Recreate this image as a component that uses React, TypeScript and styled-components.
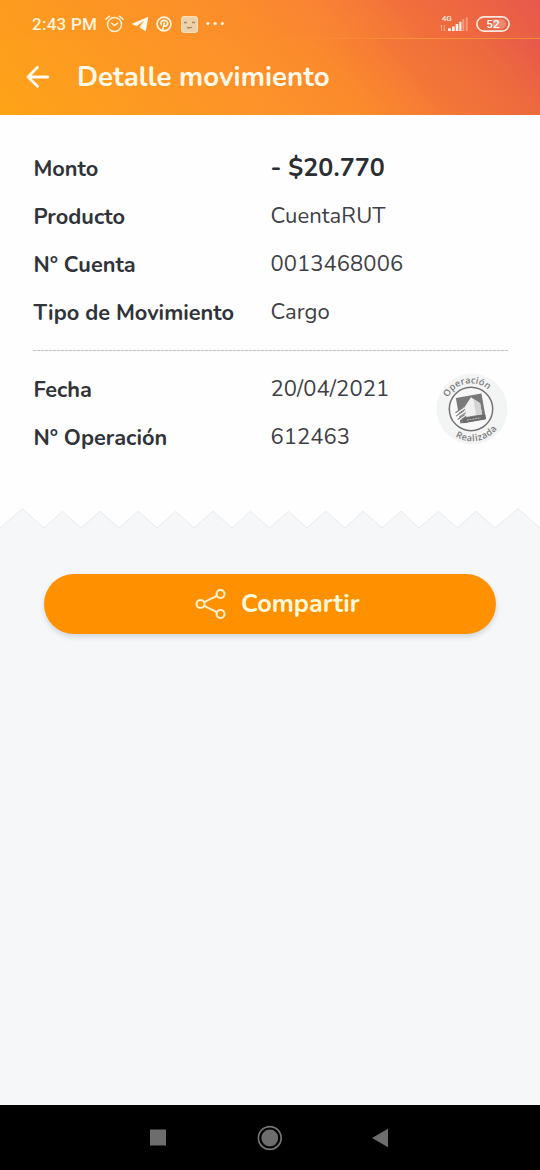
import React from "react";
import styled, { createGlobalStyle } from "styled-components";

const GlobalStyle = createGlobalStyle`
  * { box-sizing: border-box; }
  body { margin: 0; background: #f5f7f9; font-family: "Nunito", "Open Sans", "Noto Sans", sans-serif; }
`;

const Screen = styled.div`
  display: flex;
  flex-direction: column;
  width: 540px;
  height: 1170px;
  background: #f5f7f9;
`;

const StatusBar = styled.div`
  display: flex;
  align-items: center;
  justify-content: space-between;
  height: 39px;
  padding: 9px 30px 0 32px;
  color: #fff3dc;
  background: linear-gradient(90deg, transparent 50%, #fb8f3a 75%) 0 100% / 100% 1px no-repeat,
    linear-gradient(51deg, transparent 72.5%, rgba(228, 75, 80, 0.05) 73%),
    linear-gradient(52deg, #fd9d1d 0%, #fc8d2b 45%, #f98333 60%, #f2703b 76%, #eb6244 92%, #e7584d 100%);
  font-family: Roboto, sans-serif;
`;

const StatusGroup = styled.div<{ $gap: number }>`
  display: flex;
  align-items: center;
  gap: ${(p) => p.$gap}px;
`;

const Clock = styled.span`
  font-size: 17px;
  line-height: 20px;
  font-weight: 500;
  letter-spacing: 0.25px;
  white-space: nowrap;
  width: 66px;
`;

const Header = styled.header`
  display: flex;
  align-items: center;
  height: 76px;
  padding: 0 26px;
  gap: 27px;
  background: linear-gradient(51deg, transparent 73%, rgba(228, 75, 80, 0.05) 73.4%),
    linear-gradient(48deg, #fea317 0%, #fd922a 45%, #fb8a2c 61%, #f67b35 72%, #ed6b3d 89%, #e7584b 100%);
`;

const Fitted = styled.span<{ $size: number; $weight?: number; $spacing?: number; $color?: string }>`
  font-size: ${(p) => p.$size}px;
  font-weight: ${(p) => p.$weight ?? 400};
  letter-spacing: ${(p) => p.$spacing ?? 0}px;
  color: ${(p) => p.$color ?? "#303338"};
  line-height: 30px;
  white-space: nowrap;
`;

const Label = styled(Fitted)`
  padding-top: 1px;
`;

const Receipt = styled.main`
  background: #fefefe;
  padding: 38px 32px 0 33px;
  height: 393px;
`;

const Row = styled.div`
  display: grid;
  grid-template-columns: 237px 1fr;
  height: 48px;
  padding-left: 0.4px;
  align-items: start;
`;

const Divider = styled.div`
  height: 1px;
  margin: 5px 0 23px;
  background: repeating-linear-gradient(90deg, #c3c5c8 0 3px, #ededee 3px 4px);
`;

const Operation = styled.section`
  display: flex;
  justify-content: space-between;
`;

const OperationRows = styled.div`
  flex: 1;
`;

const Stamp = styled.svg`
  flex: none;
  width: 72px;
  height: 72px;
  margin-top: -1px;
`;

const TornEdge = styled.svg`
  display: block;
  flex: none;
`;

const Actions = styled.div`
  flex: 1;
  padding: 44px 44px 0;
`;

const ShareButton = styled.button`
  display: flex;
  align-items: center;
  width: 452px;
  height: 60px;
  padding: 0 0 0 151px;
  gap: 14px;
  border: 0;
  border-radius: 30px;
  background: #ff9100;
  box-shadow: 0 3px 5px rgba(60, 70, 90, 0.18);
  font-family: inherit;
`;

const NavBar = styled.nav`
  display: flex;
  align-items: center;
  justify-content: space-between;
  height: 65px;
  padding: 0 152px 0 149px;
  background: #000;
`;

type Detail = { label: string; value: string; strong?: boolean };

const details: Detail[] = [
  { label: "Monto", value: "- $20.770", strong: true },
  { label: "Producto", value: "CuentaRUT" },
  { label: "N° Cuenta", value: "0013468006" },
  { label: "Tipo de Movimiento", value: "Cargo" },
];

const operation: Detail[] = [
  { label: "Fecha", value: "20/04/2021" },
  { label: "N° Operación", value: "612463" },
];

const DetailRow = ({ label, value, strong }: Detail) => (
  <Row>
    <Label $size={21.75} $weight={670} $spacing={0.01}>{label}</Label>
    <Fitted $size={strong ? 25 : 22} $weight={strong ? 700 : 400} $spacing={0.08} $color={strong ? "#2b2e33" : "#3d4045"}>
      {value}
    </Fitted>
  </Row>
);

const peaks = [22.5, 62.5, 100, 138, 175.5, 213, 250.5, 288.5, 326, 363, 401, 438.5, 476, 518];
const valleys = [44, 81, 119, 157, 194, 232, 269.5, 307, 345, 382, 419, 457.5, 495, 540];
const tear = peaks
  .map((x, i) => `L${x} ${i === 0 || i === peaks.length - 1 ? 0.6 : 3.2}L${valleys[i]} 20`)
  .join("");

export default function App() {
  return (
    <Screen>
      <GlobalStyle />
      <StatusBar>
        <StatusGroup $gap={7}>
          <Clock>2:43 PM</Clock>
          <svg width="19" height="18" viewBox="0 0 19 18" fill="none" stroke="#fff0d2" strokeWidth="1.5" strokeLinecap="round">
            <circle cx="9.5" cy="9.5" r="7" />
            <path d="M1 4.2 4.6 1.2M18 4.2 14.4 1.2M6.7 8.3 9.3 10.5 12.6 8.2" />
          </svg>
          <svg width="18" height="16" viewBox="0 0 18 16" fill="#fffaf0">
            <path d="M.5 8 17.3.7 14.8 15.3 8.3 11.2 13.4 4.4 5.8 10Z" />
          </svg>
          <svg width="16" height="16" viewBox="0 0 16 16">
            <circle cx="8" cy="8" r="6.9" fill="none" stroke="#fff5e0" strokeWidth="1.7" />
            <path d="M5.6 9C3.9 6.6 5.4 4.4 8.3 4.4c2.7 0 3.8 2 3.1 4-.8 2.2-3 2.2-3.5.9M8.4 6.4 6.6 14.4" fill="none" stroke="#fff5e0" strokeWidth="1.7" />
          </svg>
          <svg width="19" height="17" viewBox="-2 0 19 17">
            <rect x=".6" y=".6" width="15.8" height="15.8" rx="2" fill="#ecd2aa" stroke="#ffe7bd" />
            <path d="M3 6.5h3M11 6.5h3M6 11.5q3 .7 5-.3" stroke="#a98767" strokeWidth="1.4" fill="none" />
          </svg>
          <svg width="20" height="6" viewBox="0 0 20 6" fill="#fff0d6">
            <circle cx="2.8" cy="2.6" r="1.7" />
            <circle cx="10.1" cy="2.6" r="1.7" />
            <circle cx="17.3" cy="2.6" r="1.7" />
          </svg>
        </StatusGroup>
        <StatusGroup $gap={8}>
          <svg width="28" height="18" viewBox="0 0 28 18" fill="#fff0e4">
            <text x="1.8" y="6.4" fontSize="8" fontWeight="500" fontFamily="Roboto, sans-serif">4G</text>
            <path d="M1.5 10v6M.3 11.4 1.5 10M4.2 10v6M4.2 16l1.2-1.4" stroke="#fbc2a0" strokeWidth=".8" fill="none" />
            <path d="M8 13.3h2.9V16H8zM12 11.4h2.7V16H12zM15.7 9h2.6v7h-2.6zM19.2 6.7h2.3V16h-2.3z" />
            <path d="M22.4 4h1.9v12h-1.9zM25.8 2.2h1.8V16h-1.8z" opacity=".4" />
          </svg>
          <svg width="34" height="16" viewBox="0 0 34 16">
            <rect x=".9" y=".9" width="32.2" height="14.2" rx="7.1" fill="none" stroke="#ffe9df" strokeWidth="1.6" />
            <path d="M17 3.2h8a4.8 4.8 0 0 1 0 9.6h-8Z" fill="#fff" opacity=".25" />
            <text x="17" y="12.2" fontSize="11.8" fontWeight="500" textAnchor="middle" fill="#fff" fontFamily="Roboto, sans-serif">52</text>
          </svg>
        </StatusGroup>
      </StatusBar>
      <Header>
        <svg width="24" height="24" viewBox="0 0 24 24" fill="none" stroke="#fffaf0" strokeWidth="2.8" strokeLinecap="round" strokeLinejoin="round">
          <path d="M22 12H2.5M11.5 2.2 2 12l9.5 9.3" />
        </svg>
        <Fitted $size={27.6} $weight={680} $spacing={0.06} $color="#fff9ea">Detalle movimiento</Fitted>
      </Header>
      <Receipt>
        {details.map((d) => (
          <DetailRow key={d.label} {...d} />
        ))}
        <Divider />
        <Operation>
          <OperationRows>
            {operation.map((d) => (
              <DetailRow key={d.label} {...d} />
            ))}
          </OperationRows>
          <Stamp viewBox="0 0 72 72">
            <defs>
              <path id="arcTop" d="M9.3 36a25.7 25.7 0 0 1 51.4 0" />
              <path id="arcBottom" d="M3.5 36a32.3 32.3 0 0 0 64.6 0" />
            </defs>
            <circle cx="36" cy="36" r="35.5" fill="#f3f4f4" />
            <circle cx="35" cy="36" r="21.7" fill="#f8f8f8" stroke="#747474" strokeWidth="1.5" />
            <g transform="rotate(-10 35 36)">
              <path d="M22 22.5h26v26H22z" fill="#7a7a7a" />
              <path d="M29 43V33l8-8.5L45 32v11z" fill="#f0f0f0" />
              <path d="M39 26.5V43h6V32z" fill="#d4d4d4" />
              <path d="M18 38.5l11-5M18 42l11-5M19 45.5l10-5" stroke="#f7f7f7" strokeWidth="2.2" />
              <path d="M19 37l9-4M19 40.5l9-4M20 44l8-3.6" stroke="#777" strokeWidth="1" />
              <path d="M25 43.8h23v5H25z" fill="#6a6a6a" />
              <path d="M29 46.3h14" stroke="#bbb" strokeWidth="1" strokeDasharray="2 .7" />
            </g>
            <g fontSize="9.2" fontWeight="600" fill="#7b7b7b" textAnchor="middle" fontFamily='"Open Sans", sans-serif'>
              <text letterSpacing=".1"><textPath href="#arcTop" startOffset="44%">Operación</textPath></text>
              <text letterSpacing=".5"><textPath href="#arcBottom" startOffset="56%">Realizada</textPath></text>
            </g>
          </Stamp>
        </Operation>
      </Receipt>
      <TornEdge width="540" height="22" viewBox="0 0 540 22">
        <rect width="540" height="20" fill="#fefefe" />
        <path d={`M0 20${tear}V22H0Z`} fill="#f5f7f9" />
        <path d={`M0 20${tear}`} fill="none" stroke="#e9ebed" strokeWidth="1" />
      </TornEdge>
      <Actions>
        <ShareButton>
          <svg width="32" height="32" viewBox="0 0 32 32" fill="none" stroke="#fff4cf" strokeWidth="2">
            <circle cx="5.5" cy="16" r="4" />
            <circle cx="25.5" cy="6" r="4" />
            <circle cx="25.5" cy="26" r="4" />
            <path d="M9.1 14.2 21.9 7.8M9.1 17.8 21.9 24.2" />
          </svg>
          <Fitted $size={25.2} $weight={700} $color="#fff9dc">Compartir</Fitted>
        </ShareButton>
      </Actions>
      <NavBar>
        <svg width="17" height="17" viewBox="0 0 17 17"><path d="M1 .5h16v16H1z" fill="#6d6d6d" /></svg>
        <svg width="27" height="26" viewBox="0 0 27 26">
          <circle cx="14.8" cy="13" r="11.4" fill="none" stroke="#777" strokeWidth="1.6" />
          <circle cx="14.8" cy="13" r="8.4" fill="#6d6d6d" />
        </svg>
        <svg width="17" height="20" viewBox="0 0 17 20"><path d="M1 10 17 .8v18.4z" fill="#6d6d6d" /></svg>
      </NavBar>
    </Screen>
  );
}
